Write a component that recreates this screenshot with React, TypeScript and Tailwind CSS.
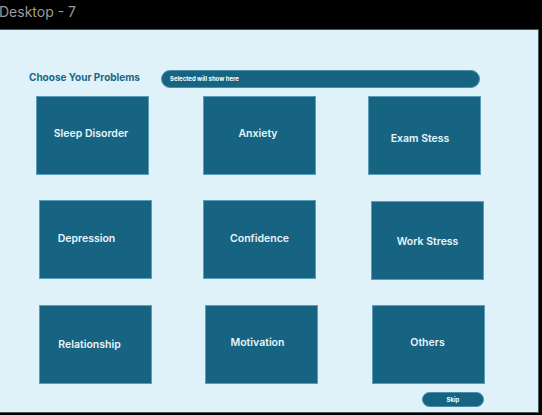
import React from "react";

type Card = { label: string; ml: string; text: string; mt?: string };

const Box = ({ label, ml, text, mt }: Card) => (
  <div
    className={`${ml} ${mt ?? ""} w-[113px] h-[79px] shrink-0 bg-[#176482] border border-[#5d9cb6] flex items-center justify-center`}
  >
    <span className={`${text} text-[10.5px] font-semibold text-[#e9f4f8] whitespace-nowrap`}>{label}</span>
  </div>
);

export default function App() {
  return (
    <div
      className="w-[542px] h-[415px] bg-black overflow-hidden flex flex-col"
      style={{ fontFamily: "Inter, 'Noto Sans', sans-serif" }}
    >
      <div className="h-[29px] shrink-0 flex items-start">
        <span className="-ml-[1px] mt-[5px] text-[14px] text-[#9c9c9c] leading-none">Desktop - 7</span>
      </div>
      <div className="w-[539px] h-[384px] shrink-0 bg-[#dff1f9] border-t border-r border-b border-[#46565c] flex flex-col">
        <div className="flex items-start mt-[40px] h-[18px]">
          <span className="ml-[29px] mt-[1px] text-[10px] font-bold text-[#1b6685] leading-[12px] whitespace-nowrap">
            Choose Your Problems
          </span>
          <div className="ml-[21px] w-[319px] h-[18px] rounded-full bg-[#176482] border border-[#4f8ea8] flex items-center pl-[8px]">
            <span className="text-[6px] font-bold text-white leading-none whitespace-nowrap">Selected will show here</span>
          </div>
        </div>

        <div className="flex mt-[8px]">
          <Box label="Sleep Disorder" ml="ml-[36px]" text="pr-[3px] pb-[4px]" />
          <Box label="Anxiety" ml="ml-[54px]" text="pr-[3px] pb-[4px]" />
          <Box label="Exam Stess" ml="ml-[52px]" text="pr-[9px] pt-[6px]" />
        </div>

        <div className="flex mt-[25px]">
          <Box label="Depression" ml="ml-[39px]" text="pr-[18px] pb-[2px]" />
          <Box label="Confidence" ml="ml-[51px]" text="pb-[2px]" />
          <Box label="Work Stress" ml="ml-[55px]" mt="mt-[1px]" text="pt-[2px]" />
        </div>

        <div className="flex mt-[25px]">
          <Box label="Relationship" ml="ml-[39px]" text="pr-[12px] pt-[1px]" />
          <Box label="Motivation" ml="ml-[53px]" text="pr-[8px] pb-[4px]" />
          <Box label="Others" ml="ml-[54px]" text="pr-[2px] pb-[4px]" />
        </div>

        <div className="flex mt-[8px]">
          <div className="ml-[422px] w-[62px] h-[15px] rounded-full bg-[#176482] border border-[#4f8ea8] flex items-center justify-center">
            <span className="text-[6px] font-bold text-white leading-none">Skip</span>
          </div>
        </div>
      </div>
    </div>
  );
}
